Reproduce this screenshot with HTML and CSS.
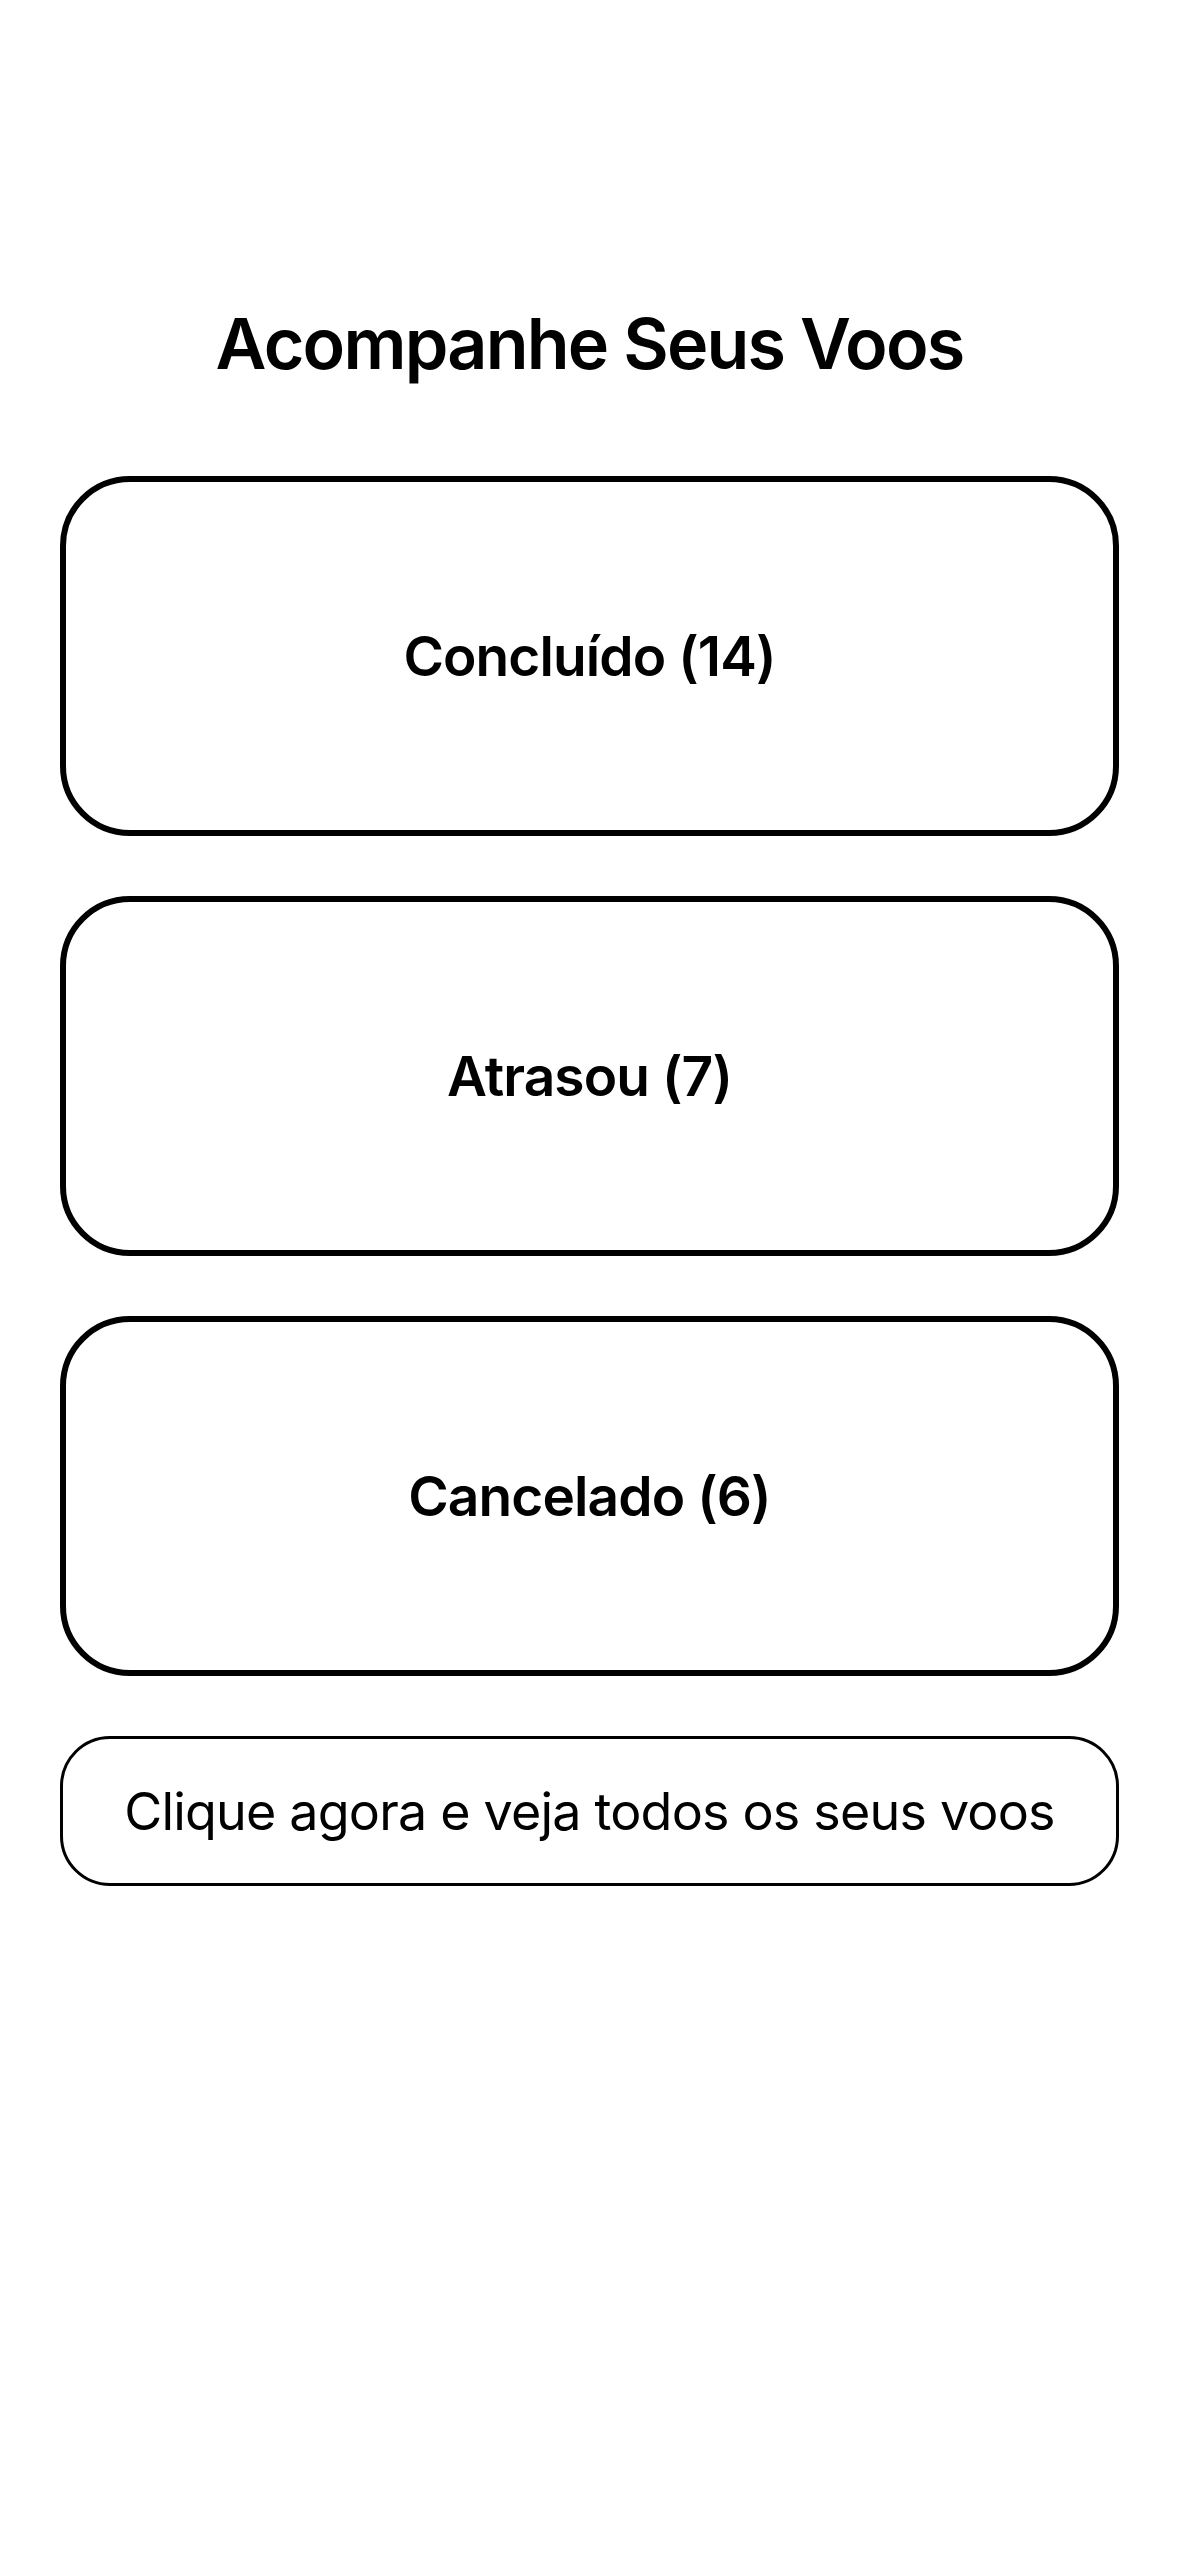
FILE: index.html
```html
<!DOCTYPE html>
<html lang="pt-BR">
<head>
<meta charset="utf-8">
<title>Acompanhe Seus Voos</title>
<link rel="stylesheet" href="styles.css">
</head>
<body>
<main class="screen">
  <h1 class="title">Acompanhe Seus Voos</h1>
  <div class="cards">
    <div class="card"><span class="card-label">Concluído (14)</span></div>
    <div class="card"><span class="card-label">Atrasou (7)</span></div>
    <div class="card"><span class="card-label">Cancelado (6)</span></div>
    <button class="all-btn">Clique agora e veja todos os seus voos</button>
  </div>
</main>
</body>
</html>
```
FILE: styles.css
```css
html, body {
  margin: 0;
  padding: 0;
  background: #ffffff;
}

body {
  font-family: Inter, "Noto Sans", "Liberation Sans", sans-serif;
  color: #000000;
}

.screen {
  padding: 308px 60px 0 60px;
  display: flex;
  flex-direction: column;
}

.title {
  margin: 0;
  font-size: 70px;
  line-height: 72px;
  font-weight: 600;
  text-align: center;
  letter-spacing: -1.8px;
}

.cards {
  margin-top: 96px;
  display: flex;
  flex-direction: column;
  gap: 60px;
}

.card {
  box-sizing: border-box;
  height: 360px;
  border: 6px solid #000000;
  border-radius: 70px;
  display: flex;
  align-items: center;
  justify-content: center;
}

.card-label {
  font-size: 55px;
  font-weight: 600;
  letter-spacing: -0.9px;
}

.all-btn {
  box-sizing: border-box;
  height: 150px;
  border: 3px solid #000000;
  border-radius: 50px;
  background: #ffffff;
  color: #000000;
  font-family: Inter, "Noto Sans", "Liberation Sans", sans-serif;
  font-size: 52px;
  font-weight: 400;
  letter-spacing: -0.8px;
  padding: 0;
  display: flex;
  align-items: center;
  justify-content: center;
}
```
